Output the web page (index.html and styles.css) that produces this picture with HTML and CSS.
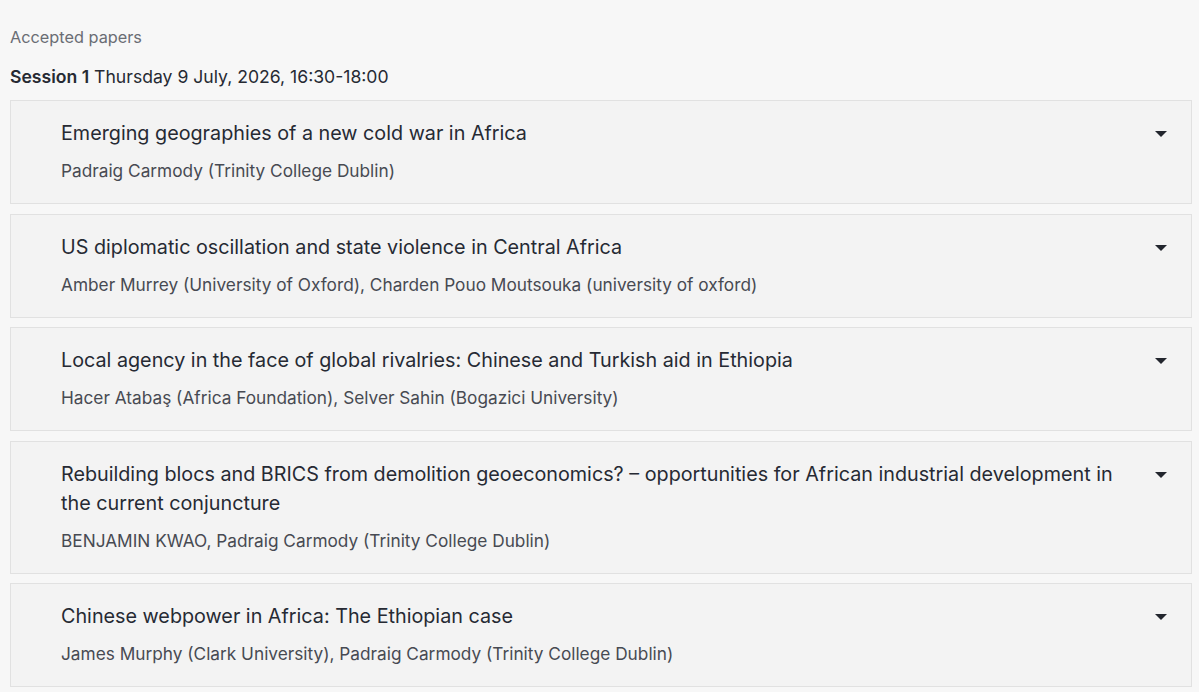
FILE: index.html
```html
<!DOCTYPE html>
<html lang="en">
<head>
<meta charset="utf-8">
<title>Accepted papers</title>
<link rel="stylesheet" href="styles.css">
</head>
<body>
<main class="page">
  <h2 class="section-label">Accepted papers</h2>
  <h3 class="session"><strong>Session 1</strong> Thursday 9 July, 2026, 16:30-18:00</h3>
  <ul class="papers">
    <li class="paper">
      <div class="paper-body">
        <div class="paper-title">Emerging geographies of a new cold war in Africa</div>
        <div class="paper-authors">Padraig Carmody (Trinity College Dublin)</div>
      </div>
      <span class="caret"></span>
    </li>
    <li class="paper">
      <div class="paper-body">
        <div class="paper-title">US diplomatic oscillation and state violence in Central Africa</div>
        <div class="paper-authors">Amber Murrey (University of Oxford), Charden Pouo Moutsouka (university of oxford)</div>
      </div>
      <span class="caret"></span>
    </li>
    <li class="paper">
      <div class="paper-body">
        <div class="paper-title">Local agency in the face of global rivalries: Chinese and Turkish aid in Ethiopia</div>
        <div class="paper-authors">Hacer Atabaş (Africa Foundation), Selver Sahin (Bogazici University)</div>
      </div>
      <span class="caret"></span>
    </li>
    <li class="paper">
      <div class="paper-body">
        <div class="paper-title">Rebuilding blocs and BRICS from demolition geoeconomics? – opportunities for African industrial development in the current conjuncture</div>
        <div class="paper-authors">BENJAMIN KWAO, Padraig Carmody (Trinity College Dublin)</div>
      </div>
      <span class="caret"></span>
    </li>
    <li class="paper">
      <div class="paper-body">
        <div class="paper-title">Chinese webpower in Africa: The Ethiopian case</div>
        <div class="paper-authors">James Murphy (Clark University), Padraig Carmody (Trinity College Dublin)</div>
      </div>
      <span class="caret"></span>
    </li>
  </ul>
</main>
</body>
</html>
```

FILE: styles.css
```css
* { box-sizing: border-box; }
html, body {
  margin: 0;
  padding: 0;
  background: #f7f7f7;
}
body {
  font-family: Inter, "Open Sans", "Liberation Sans", sans-serif;
  color: #262a33;
  -webkit-font-smoothing: antialiased;
}
.page {
  padding: 26px 7px 0 10px;
}
.section-label {
  margin: 0;
  font-size: 16.3px;
  font-weight: 400;
  line-height: 22px;
  color: #6a6d74;
}
.session {
  margin: 16px 0 0 0;
  font-size: 17.6px;
  font-weight: 400;
  line-height: 26px;
  color: #262a33;
}
.session strong {
  font-weight: 600;
}
.papers {
  list-style: none;
  margin: 10px 0 0 0;
  padding: 0;
  display: flex;
  flex-direction: column;
  gap: 9.5px;
}
.paper {
  display: flex;
  align-items: flex-start;
  background: #f3f3f3;
  border: 1px solid #e1e1e1;
  padding: 18px 24px 20px 50px;
}
.paper-body {
  flex: 1;
  min-width: 0;
}
.paper-title {
  font-size: 19.75px;
  line-height: 29px;
  color: #262a33;
}
.paper-authors {
  margin-top: 11px;
  font-size: 17.25px;
  line-height: 24px;
  color: #474a52;
}
.caret {
  flex: none;
  width: 0;
  height: 0;
  margin: 12px 0 0 20px;
  border-left: 6px solid transparent;
  border-right: 6px solid transparent;
  border-top: 6px solid #22252d;
}
```
